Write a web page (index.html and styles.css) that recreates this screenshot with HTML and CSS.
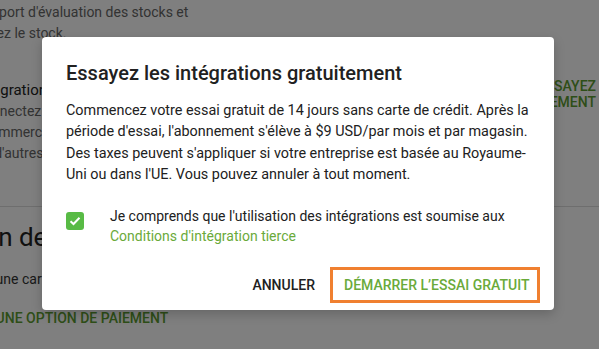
FILE: index.html
```html
<!DOCTYPE html>
<html lang="fr">
<head>
<meta charset="utf-8">
<link rel="stylesheet" href="styles.css">
</head>
<body>
<div class="page">
  <div class="bg-left">
    <p class="bg-text">Rapport d'évaluation des stocks et<br>Gérez le stock.</p>
    <div class="bg-integ">
      <p class="bg-title">Intégration</p>
      <p class="bg-text">Connectez<br>Ecommerce<br>ou d'autres</p>
    </div>
  </div>
  <div class="bg-right">ESSAYEZ<br>GRATUITEMENT</div>
  <hr class="bg-sep">
  <div class="bg-left2">
    <p class="bg-h2">Option de</p>
    <p class="bg-small">Ajoutez une carte</p>
    <p class="bg-link">AJOUTER UNE OPTION DE PAIEMENT</p>
  </div>
</div>
<div class="overlay"></div>
<div class="dialog">
  <h2 class="dlg-title">Essayez les intégrations gratuitement</h2>
  <p class="dlg-body">Commencez votre essai gratuit de 14 jours sans carte de crédit. Après la période d'essai, l'abonnement s'élève à $9 USD/par mois et par magasin. Des taxes peuvent s'appliquer si votre entreprise est basée au Royaume-Uni ou dans l'UE. Vous pouvez annuler à tout moment.</p>
  <div class="dlg-check">
    <span class="checkbox"><svg width="12" height="10" viewBox="0 0 12 10"><path d="M1.5 5.2 L4.5 8 L10.5 1.8" fill="none" stroke="#fff" stroke-width="2"/></svg></span>
    <p class="check-text">Je comprends que l'utilisation des intégrations est soumise aux <a class="link">Conditions d'intégration tierce</a></p>
  </div>
  <div class="dlg-actions">
    <button class="btn btn-cancel">Annuler</button>
    <button class="btn btn-primary">Démarrer l’essai gratuit</button>
  </div>
</div>
</body>
</html>
```
FILE: styles.css
```css
* { box-sizing: border-box; }
html, body { margin: 0; padding: 0; }
body {
  width: 599px; height: 349px; overflow: hidden;
  font-family: Roboto, "Liberation Sans", sans-serif;
  background: #fff;
  position: relative;
}
p { margin: 0; }
.page { position: relative; width: 599px; height: 349px; overflow: hidden; }
.bg-left { margin-left: -25px; padding-top: 2px; }
.bg-text { font-size: 14px; line-height: 21px; color: #666; white-space: nowrap; }
.bg-integ { margin-top: 36px; }
.bg-title { font-size: 15px; line-height: 21px; color: #222; }
.bg-right {
  position: absolute; right: 3px; top: 78px; text-align: right;
  font-size: 14px; line-height: 16px; font-weight: 500; color: #5c9c30;
}
.bg-sep { margin: 42px 0 0; border: 0; border-top: 1px solid #ddd; }
.bg-left2 { margin-left: -64px; padding-top: 14px; white-space: nowrap; }
.bg-h2 { font-size: 26px; line-height: 32px; color: #222; }
.bg-small { margin-top: 16px; font-size: 14px; line-height: 20px; color: #333; margin-left: 9px; }
.bg-link { margin-top: 19px; font-size: 14px; line-height: 20px; font-weight: 500; color: #5c9c30; margin-left: -5px; }

.overlay { position: absolute; inset: 0; background: rgba(0,0,0,0.5); }

.dialog {
  position: absolute; left: 42px; top: 37px; width: 512px; height: 273px;
  background: #fff; border-radius: 4px;
  padding: 24px 14px 7px 24px;
  box-shadow: 0 4px 12px rgba(0,0,0,0.2);
  display: flex; flex-direction: column;
}
.dlg-title { margin: 0; font-size: 20px; font-weight: 500; line-height: 24px; color: #212121; }
.dlg-body { margin-top: 15px; padding-right: 2px; font-size: 14.4px; line-height: 21.3px; color: #212121; }
.dlg-check { display: flex; align-items: flex-start; margin-top: 21px; }
.checkbox {
  width: 18px; height: 18px; border-radius: 3px; background: #58bb45;
  display: flex; align-items: center; justify-content: center; margin-top: 6px; flex: none;
}
.check-text { margin-left: 26px; font-size: 14px; line-height: 20px; color: #212121; }
.link { color: #6aaa3a; }
.dlg-actions { margin-top: auto; display: flex; justify-content: flex-end; align-items: center; gap: 4px; }
.btn {
  font-family: inherit; font-size: 14px; font-weight: 500; text-transform: uppercase;
  background: none; border: 0; height: 36px; padding: 0 11px; white-space: nowrap;
}
.btn-cancel { color: #212121; }
.btn-primary { color: #6aaa3a; border: 3px solid #f08030; width: 210px; }
```
